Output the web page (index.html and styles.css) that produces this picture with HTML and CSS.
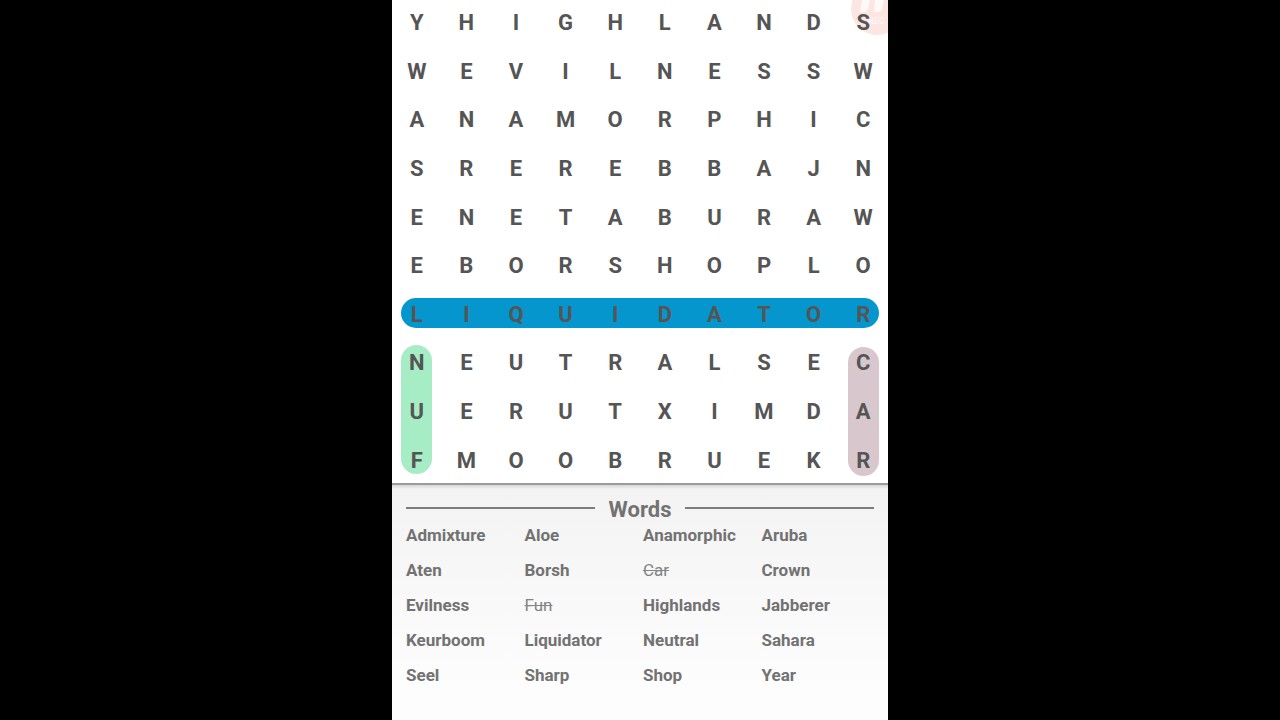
FILE: index.html
```html
<!DOCTYPE html>
<html lang="en">
<head>
<meta charset="utf-8">
<title>Word Search</title>
<link rel="stylesheet" href="styles.css">
</head>
<body>
<main class="phone">
  <svg class="recorder" viewBox="0 0 37 36" aria-hidden="true">
    <circle cx="26" cy="9" r="26" fill="#fde6e2"/>
    <path d="M11 0h8l-2 9q-1 3-4 3h-4zM24 0h9l-2 9q-1 3-4 3h-4z" fill="#fff" fill-opacity=".75"/>
    <text class="recorder-label" x="17" y="24">REC</text>
  </svg>
  <section class="board" aria-label="Letter grid">
    <div class="mark mark-liquidator"></div>
    <div class="mark mark-fun"></div>
    <div class="mark mark-car"></div>
    <div class="letters">
      <div class="row"><span>Y</span><span>H</span><span>I</span><span>G</span><span>H</span><span>L</span><span>A</span><span>N</span><span>D</span><span>S</span></div>
      <div class="row"><span>W</span><span>E</span><span>V</span><span>I</span><span>L</span><span>N</span><span>E</span><span>S</span><span>S</span><span>W</span></div>
      <div class="row"><span>A</span><span>N</span><span>A</span><span>M</span><span>O</span><span>R</span><span>P</span><span>H</span><span>I</span><span>C</span></div>
      <div class="row"><span>S</span><span>R</span><span>E</span><span>R</span><span>E</span><span>B</span><span>B</span><span>A</span><span>J</span><span>N</span></div>
      <div class="row"><span>E</span><span>N</span><span>E</span><span>T</span><span>A</span><span>B</span><span>U</span><span>R</span><span>A</span><span>W</span></div>
      <div class="row"><span>E</span><span>B</span><span>O</span><span>R</span><span>S</span><span>H</span><span>O</span><span>P</span><span>L</span><span>O</span></div>
      <div class="row"><span>L</span><span>I</span><span>Q</span><span>U</span><span>I</span><span>D</span><span>A</span><span>T</span><span>O</span><span>R</span></div>
      <div class="row"><span>N</span><span>E</span><span>U</span><span>T</span><span>R</span><span>A</span><span>L</span><span>S</span><span>E</span><span>C</span></div>
      <div class="row"><span>U</span><span>E</span><span>R</span><span>U</span><span>T</span><span>X</span><span>I</span><span>M</span><span>D</span><span>A</span></div>
      <div class="row"><span>F</span><span>M</span><span>O</span><span>O</span><span>B</span><span>R</span><span>U</span><span>E</span><span>K</span><span>R</span></div>
    </div>
  </section>
  <section class="words">
    <h2 class="title">Words</h2>
    <ul class="list">
      <li>Admixture</li><li>Aloe</li><li>Anamorphic</li><li>Aruba</li>
      <li>Aten</li><li>Borsh</li><li class="found">Car</li><li>Crown</li>
      <li>Evilness</li><li class="found">Fun</li><li>Highlands</li><li>Jabberer</li>
      <li>Keurboom</li><li>Liquidator</li><li>Neutral</li><li>Sahara</li>
      <li>Seel</li><li>Sharp</li><li>Shop</li><li>Year</li>
    </ul>
  </section>
</main>
</body>
</html>
```

FILE: styles.css
```css
* {
  box-sizing: border-box;
}

body {
  margin: 0;
  background: #000;
  font-family: Roboto, "Liberation Sans", sans-serif;
}

.phone {
  position: relative;
  display: flex;
  flex-direction: column;
  width: 100%;
  max-width: 496px;
  min-height: 100vh;
  margin: 0 auto;
  overflow: hidden;
  background: #fff;
}

.board {
  display: grid;
  grid-template-columns: repeat(10, 1fr);
  grid-template-rows: repeat(10, 1fr);
  height: 486px;
  margin: -1px 0 -2px;
  z-index: 1;
}

.letters {
  display: grid;
  grid-area: 1 / 1 / 11 / 11;
  grid-template-rows: repeat(10, 1fr);
  z-index: 1;
}

.row {
  display: grid;
  grid-template-columns: repeat(10, 1fr);
  place-items: center;
  color: #555;
  font-size: 22px;
  font-weight: 700;
  line-height: 28px;
}

.mark {
  border-radius: 16px;
}

.mark-liquidator {
  grid-area: 7 / 1 / 8 / 11;
  margin: 7px 9px 11px;
  background: #0596cd;
}

.mark-fun {
  grid-area: 8 / 1 / 11 / 2;
  margin: 6px 10px 11px 9px;
  background: #a6edc5;
}

.mark-car {
  grid-area: 8 / 10 / 11 / 11;
  margin: 8px 9px 9px 10px;
  background: #d8c8ce;
}

.words {
  flex: 1;
  padding: 12px 14px 0;
  border-top: 2px solid #9b9b9b;
  background: linear-gradient(#d5d5d5, #f3f3f3 4px, #f7f7f7 80px, #fcfcfc 180px, #fdfdfd);
}

.title {
  display: flex;
  align-items: flex-start;
  gap: 14px;
  margin: 0;
  color: #727272;
  font-size: 22px;
  font-weight: 700;
  line-height: 26px;
}

.title::before,
.title::after {
  content: "";
  flex: 1;
  height: 2px;
  margin-top: 10px;
  background: #7d7d7d;
}

.list {
  display: grid;
  grid-template-columns: repeat(4, 1fr);
  gap: 15px 2px;
  margin: 2px -4px 0 0;
  padding: 0;
  color: #727272;
  font-size: 17px;
  font-weight: 700;
  line-height: 20px;
  list-style: none;
}

.found {
  color: #848484;
  font-weight: 400;
  text-decoration: line-through;
}

.recorder {
  position: absolute;
  top: 0;
  right: 0;
  width: 37px;
  height: 36px;
}

.recorder-label {
  fill: #fff;
  fill-opacity: .6;
  font-size: 9px;
  font-weight: 700;
}
```
